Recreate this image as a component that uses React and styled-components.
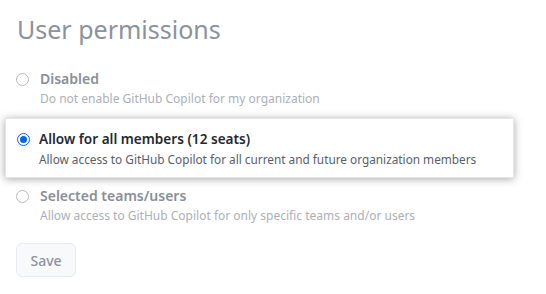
import React from "react";
import styled, { createGlobalStyle } from "styled-components";

const Global = createGlobalStyle`
  html, body { margin: 0; padding: 0; background: #ffffff; }
  body { font-family: "Noto Sans", "Open Sans", sans-serif; }
`;

const Page = styled.div`
  width: 546px;
  height: 294px;
  overflow: hidden;
  padding: 11px 0 0 0;
  box-sizing: border-box;
`;

const Title = styled.h2`
  margin: 0 0 0 17px;
  font-size: 25px;
  font-weight: 400;
  line-height: 36px;
  color: #8b929b;
`;

const OptionList = styled.div`
  display: flex;
  flex-direction: column;
  margin-top: 22px;
`;

const Option = styled.label`
  display: grid;
  grid-template-columns: 13px 1fr;
  column-gap: ${(p) => (p.$active ? "9px" : "11px")};
  align-items: start;
  box-sizing: border-box;
  ${(p) =>
    p.$active
      ? `
    margin: 10px 0 8px 5px;
    width: 509px;
    padding: 10px 0 9px 11px;
    background: #fff;
    border: 1px solid #e6e6e6;
    box-shadow: 0 1px 8px rgba(0,0,0,0.35);
  `
      : `
    padding: 0 0 0 16px;
  `}
`;

const Radio = styled.span`
  width: 13px;
  height: 13px;
  margin-top: 4px;
  box-sizing: border-box;
  border-radius: 50%;
  border: ${(p) => (p.$checked ? "1.5px solid #0b63e8" : "1px solid #b8b8b8")};
  background: #fff;
  display: flex;
  align-items: center;
  justify-content: center;
  &::after {
    content: "";
    display: ${(p) => (p.$checked ? "block" : "none")};
    width: 7px;
    height: 7px;
    border-radius: 50%;
    background: #0b63e8;
  }
`;

const Texts = styled.div`
  display: flex;
  flex-direction: column;
`;

const Label = styled.span`
  font-size: ${(p) => (p.$active ? "13.6px" : "14px")};
  font-weight: 600;
  line-height: 20px;
  color: ${(p) => (p.$active ? "#24292f" : "#8a8f96")};
`;

const Desc = styled.span`
  font-size: ${(p) => (p.$active ? "11.8px" : "12px")};
  line-height: 18px;
  margin-top: 1px;
  color: ${(p) => (p.$active ? "#57606a" : "#abb0b7")};
`;

const SaveButton = styled.button`
  margin: 18px 0 0 16px;
  width: 60px;
  height: 34px;
  border: 1px solid #e8eaed;
  border-radius: 6px;
  background: #f8f9fb;
  color: #8d939b;
  font-family: "Noto Sans", "Open Sans", sans-serif;
  font-size: 14px;
  font-weight: 500;
  padding: 0;
`;

const options = [
  { label: "Disabled", desc: "Do not enable GitHub Copilot for my organization" },
  { label: "Allow for all members (12 seats)", desc: "Allow access to GitHub Copilot for all current and future organization members", active: true },
  { label: "Selected teams/users", desc: "Allow access to GitHub Copilot for only specific teams and/or users" },
];

export default function App() {
  return (
    <Page>
      <Global />
      <Title>User permissions</Title>
      <OptionList>
        {options.map((o) => (
          <Option key={o.label} $active={o.active}>
            <Radio $checked={o.active} />
            <Texts>
              <Label $active={o.active}>{o.label}</Label>
              <Desc $active={o.active}>{o.desc}</Desc>
            </Texts>
          </Option>
        ))}
      </OptionList>
      <SaveButton>Save</SaveButton>
    </Page>
  );
}
